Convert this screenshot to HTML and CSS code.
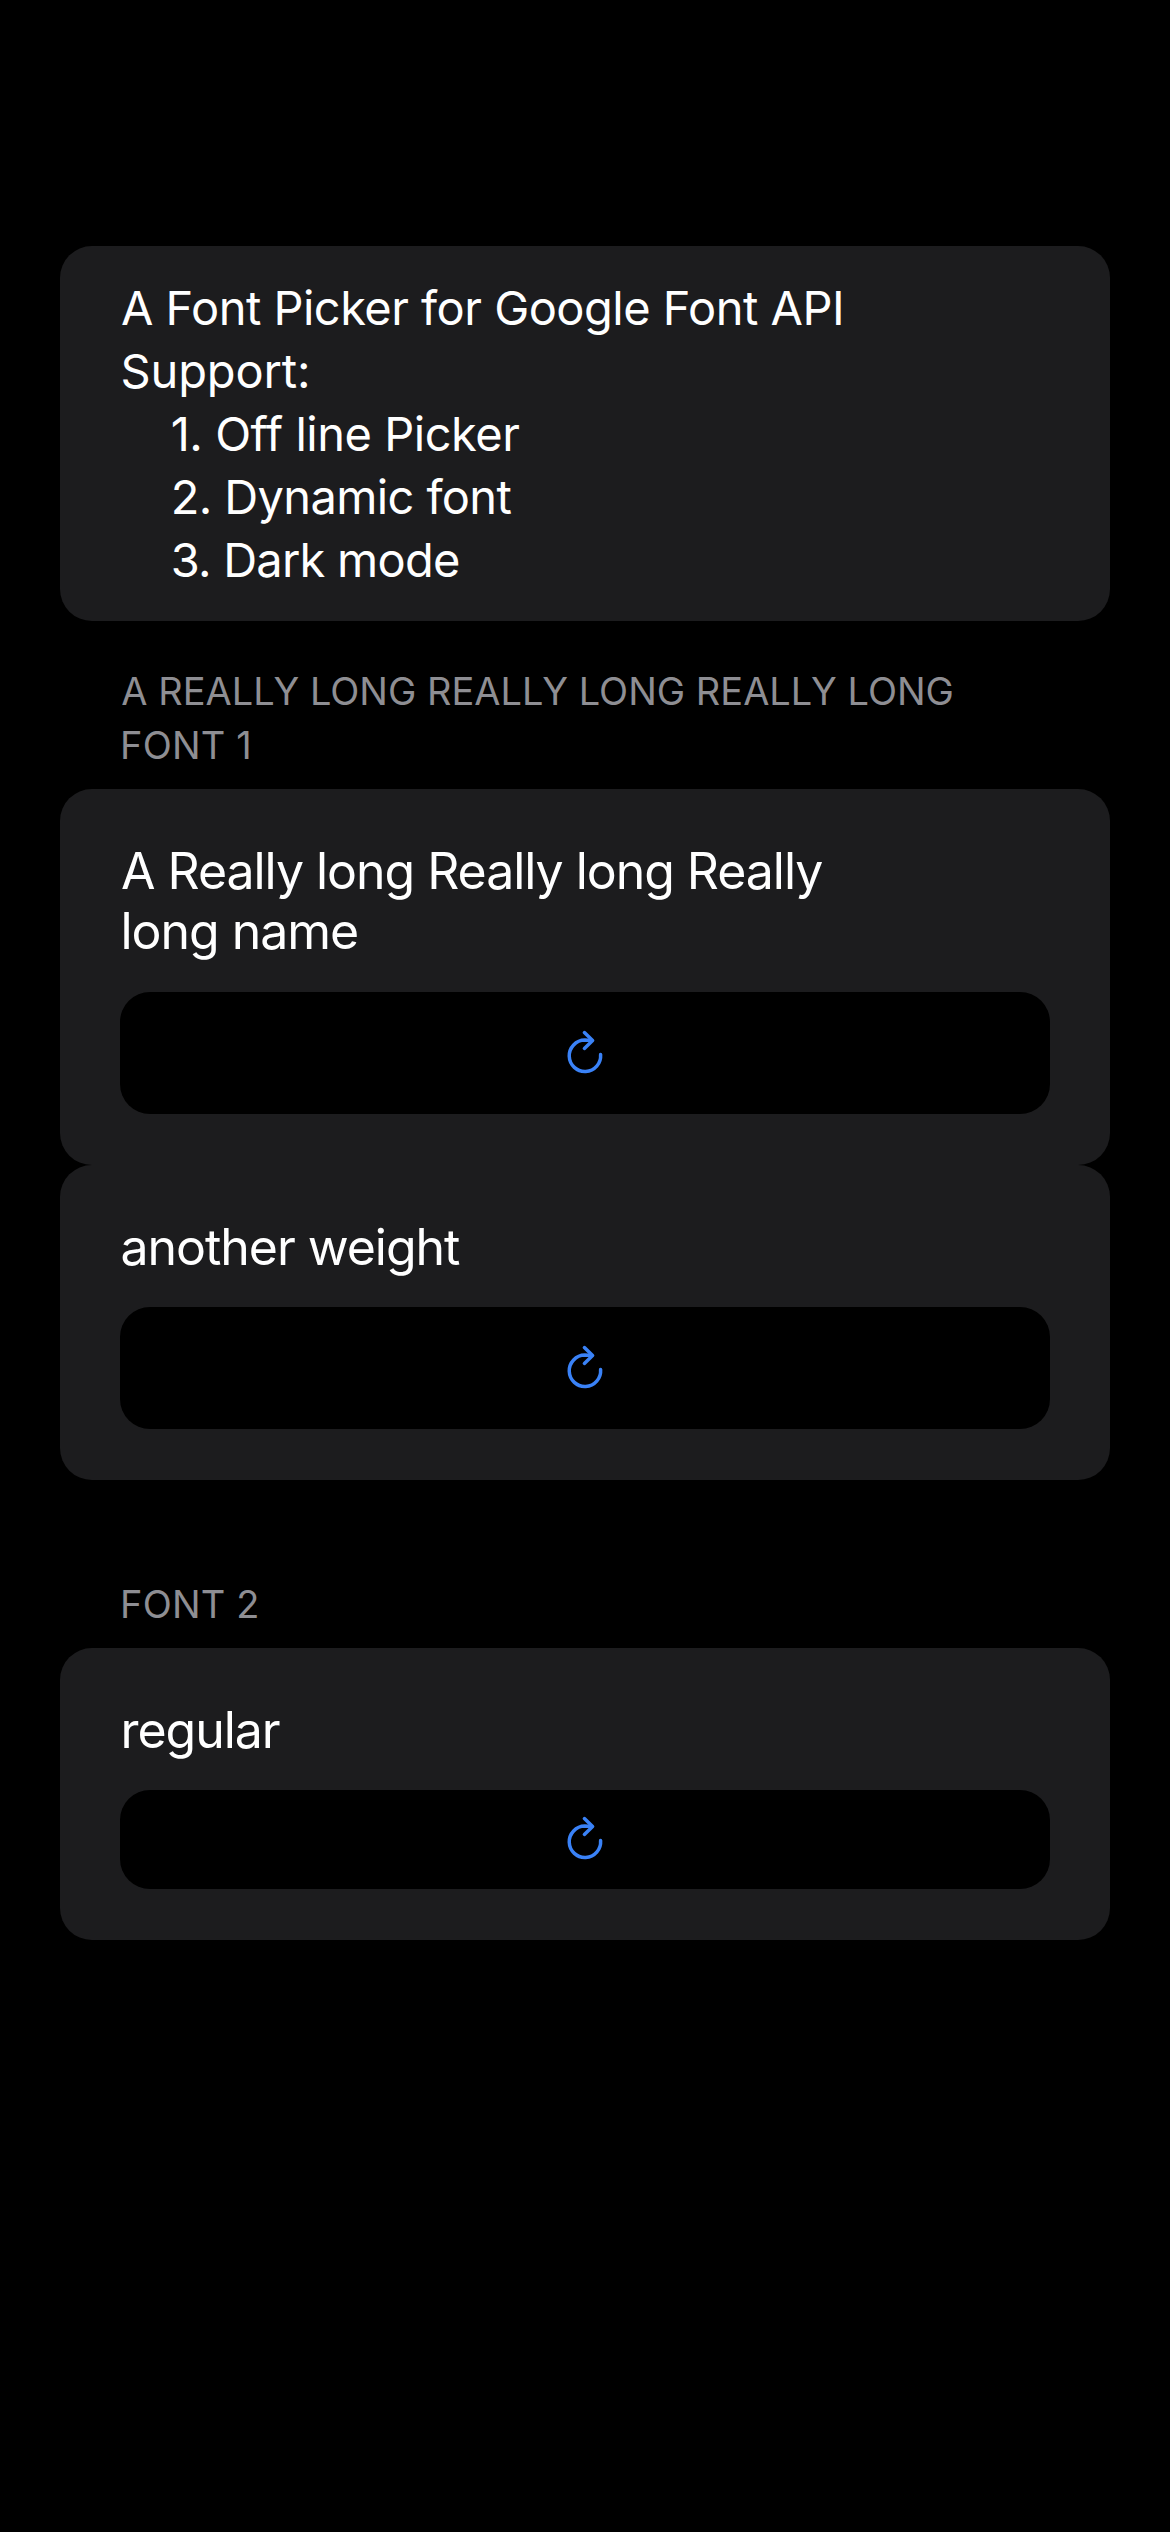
FILE: index.html
```
<!DOCTYPE html>
<html lang="en">
<head>
<meta charset="utf-8">
<title>Font Picker</title>
<link rel="stylesheet" href="styles.css">
</head>
<body>
<svg class="defs" aria-hidden="true">
  <symbol id="reload" viewBox="10 13 60 60">
    <path d="M55.6 44.6 A15.7 15.7 0 1 1 39.8 30.1 L46.5 30.6"/>
    <path d="M39.4 22.6 L47.6 30.5 L39.4 38.4"/>
  </symbol>
</svg>
<main class="screen">
  <section class="card intro">
    <p class="line-title">A Font Picker for Google Font API</p>
    <p class="line-support">Support:</p>
    <ul class="features">
      <li class="feature-offline">1. Off line Picker</li>
      <li class="feature-dynamic">2. Dynamic font</li>
      <li class="feature-dark">3. Dark mode</li>
    </ul>
  </section>

  <section class="group">
    <h2 class="group-title group-title-long"><span>A REALLY LONG REALLY LONG REALLY LONG</span><br>FONT 1</h2>
    <article class="card font">
      <h3 class="font-name font-name-long"><span>A Really long Really long Really</span><br>long name</h3>
      <button class="reload" aria-label="Reload"><svg class="icon"><use href="#reload"/></svg></button>
    </article>
    <article class="card font">
      <h3 class="font-name">another weight</h3>
      <button class="reload" aria-label="Reload"><svg class="icon"><use href="#reload"/></svg></button>
    </article>
  </section>

  <section class="group group-second">
    <h2 class="group-title">FONT 2</h2>
    <article class="card font">
      <h3 class="font-name">regular</h3>
      <button class="reload reload-compact" aria-label="Reload"><svg class="icon"><use href="#reload"/></svg></button>
    </article>
  </section>
</main>
</body>
</html>
```
FILE: styles.css
```
* {
  box-sizing: border-box;
  margin: 0;
  padding: 0;
}

body {
  background: #000;
  color: #fff;
  font-family: Inter, "Liberation Sans", sans-serif;
}

.defs {
  display: block;
  width: 0;
  height: 0;
}

.screen {
  min-height: 2532px;
  padding: 246px 60px 0;
}

.card {
  background: #1c1c1e;
  border-radius: 32px;
}

.intro {
  padding: 30px 60px 30px 60.5px;
  font-size: 47px;
  line-height: 63px;
  white-space: nowrap;
}

.line-title {
  padding-left: 0.5px;
  letter-spacing: -0.52px;
}

.line-support {
  letter-spacing: -0.14px;
}

.features {
  list-style: none;
  padding-left: 50.2px;
}

.feature-offline {
  letter-spacing: -0.47px;
}

.feature-dynamic {
  letter-spacing: -0.62px;
}

.feature-dark {
  letter-spacing: -0.76px;
}

.group {
  padding-top: 43px;
}

.group-second {
  padding-top: 97px;
}

.group-title {
  padding: 0 60px 17px;
  color: #8e8e93;
  font-size: 38px;
  font-weight: 400;
  line-height: 54px;
  letter-spacing: 0.2px;
  white-space: nowrap;
}

.group-title-long span {
  padding-left: 1.3px;
  letter-spacing: 0;
}

.font {
  padding: 52px 60px 51px;
}

.font-name {
  padding-left: 0.5px;
  margin-bottom: 30px;
  font-size: 50px;
  font-weight: 400;
  line-height: 60px;
  letter-spacing: -1.04px;
  white-space: nowrap;
}

.font-name-long {
  margin-bottom: 31px;
}

.font-name-long span {
  padding-left: 0.5px;
}

.reload {
  display: flex;
  align-items: center;
  justify-content: center;
  width: 100%;
  height: 122px;
  border: 0;
  border-radius: 30px;
  background: #000;
}

.reload-compact {
  height: 99px;
  padding-bottom: 1px;
}

.icon {
  width: 60px;
  height: 60px;
  fill: none;
  stroke: #3a82f7;
  stroke-width: 3.5;
  stroke-linecap: round;
  stroke-linejoin: round;
}
```
